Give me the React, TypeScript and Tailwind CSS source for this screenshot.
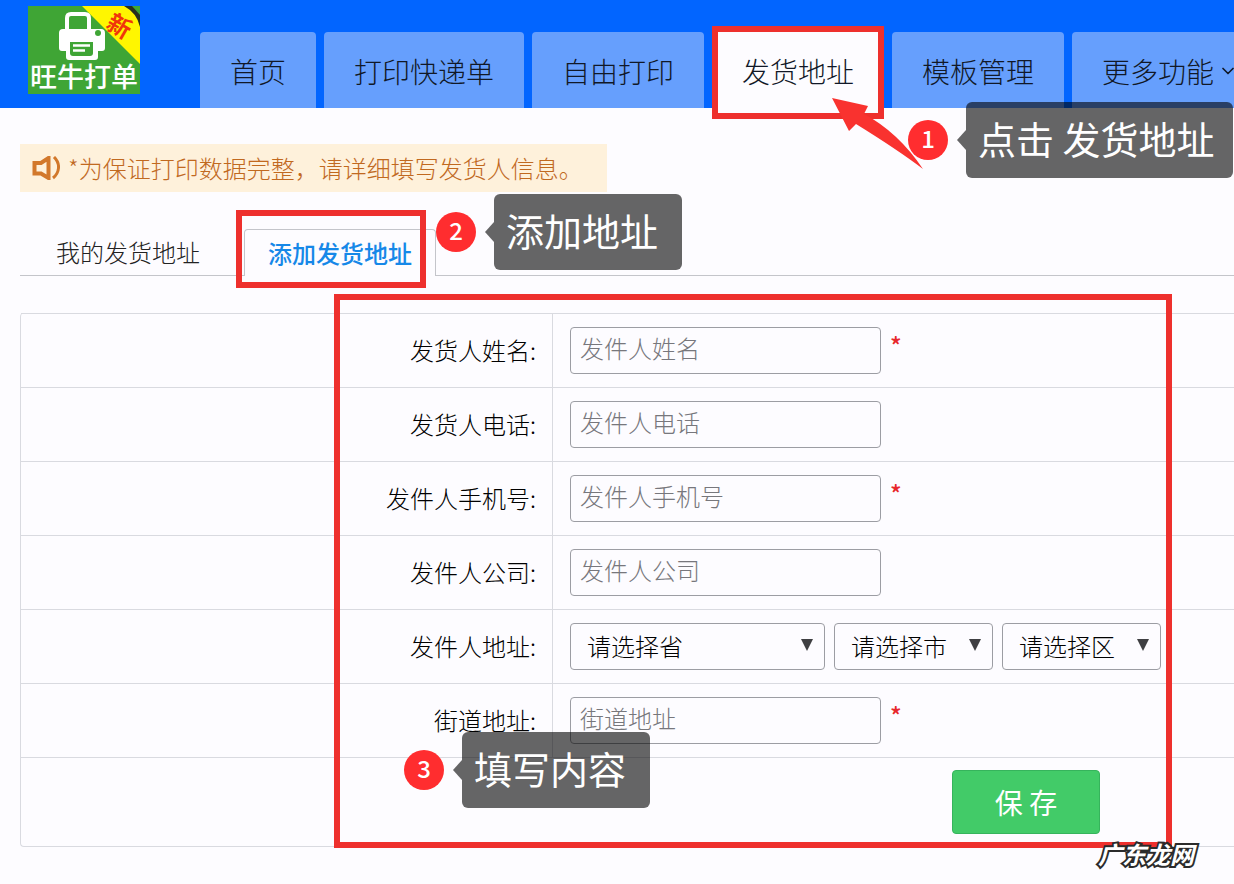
import React, { useState } from "react";
import { ChevronDown } from "lucide-react";

const navItems = ["首页", "打印快递单", "自由打印", "发货地址", "模板管理", "更多功能"];

const textFields = [
    { id: "name", label: "发货人姓名", placeholder: "发件人姓名", required: true },
    { id: "phone", label: "发货人电话", placeholder: "发件人电话", required: false },
    { id: "mobile", label: "发件人手机号", placeholder: "发件人手机号", required: true },
    { id: "company", label: "发件人公司", placeholder: "发件人公司", required: false },
];

const streetField = { id: "street", label: "街道地址", placeholder: "街道地址", required: true };

const regions = [
    { id: "province", text: "请选择省", width: "w-[255px]" },
    { id: "city", text: "请选择市", width: "w-[159px]" },
    { id: "district", text: "请选择区", width: "w-[159px]" },
];

// Numbered step with a dark tooltip on its right
function Callout({ step, text, className }: { step: number; text: string; className: string }) {
    return (
        <div className={`absolute z-20 flex items-center whitespace-nowrap ${className}`}>
            <span className="flex size-10 items-center justify-center rounded-full bg-[#ff2d2f] pb-1 text-2xl font-medium text-white">
                {step}
            </span>
            <svg className="ml-[9px] h-5 w-[9px]" viewBox="0 0 9 20" aria-hidden="true">
                <path d="M9 0v20L0 10z" fill="#000" fillOpacity="0.6" />
            </svg>
            <span className="h-[76px] min-w-[188px] rounded-md bg-black/60 pr-[18px] pl-3 text-[38px] leading-[72px] font-normal text-white">
                {text}
            </span>
        </div>
    );
}

function Logo() {
    return (
        <a href="#" className="relative mt-[6px] ml-7 block h-[88px] w-28 shrink-0 bg-[#3fa535]">
            <svg className="h-full w-full" viewBox="0 0 112 88" aria-hidden="true">
                <path d="M39 24V12q0-4 4-4h14q4 0 4 4v12" fill="none" stroke="#fff" strokeWidth="4" />
                <path d="M35 23h38q4 0 4 4v15q0 3-3 3h-4v6q0 3-3 3H41q-3 0-3-3v-6h-4q-3 0-3-3V27q0-4 4-4z" fill="#fff" />
                <path d="M42 36h23v11q0 3-3 3H45q-3 0-3-3z" fill="#3fa535" />
                <path d="M45 39.500h17M45 44.500h12" stroke="#fff" strokeWidth="2.5" />
                <circle cx="70" cy="27" r="3" fill="#3fa535" />
                <path d="M54 0h58v58z" fill="#fff600" />
                <path d="M96 0h16v21q-3-14-16-21z" fill="#26301f" />
                <path d="M104 0h8v9z" fill="#3fa535" />
            </svg>
            <span className="absolute top-[5px] left-20 rotate-30 text-2xl leading-7 font-bold text-[#f0350b]">新</span>
            <span className="absolute bottom-0 left-[2px] text-[27px] leading-9 font-medium whitespace-nowrap text-white">旺牛打单</span>
        </a>
    );
}

function Row({ id, label, children }: { id: string; label: string; children: React.ReactNode }) {
    return (
        <div className="flex border-t border-[#d9dae0]">
            <label
                htmlFor={id}
                className="w-[532px] shrink-0 border-r border-[#d9dae0] pr-4 text-right text-2xl leading-[72px] text-black"
            >
                {label}:
            </label>
            <div className="flex shrink-0 gap-[9px] py-[13px] pl-[17px]">{children}</div>
        </div>
    );
}

function TextRow({ id, label, placeholder, required }: (typeof textFields)[number]) {
    return (
        <Row id={id} label={label}>
            <input
                id={id}
                type="text"
                placeholder={placeholder}
                required={required}
                className="h-[47px] w-[311px] rounded-[4px] border border-[#9c9da3] px-[9px] pb-[6px] text-2xl text-black outline-none placeholder:text-[#77777c]"
            />
            {required && <span className="text-2xl leading-9 font-medium text-[#e8272c]">*</span>}
        </Row>
    );
}

export default function App() {
    const [activeNav, setActiveNav] = useState("发货地址");

    return (
        <div className="relative min-h-screen overflow-hidden bg-[#fdfcff] font-['Noto_Sans_CJK_SC',sans-serif] font-light text-[#222]">
            {/* Header */}
            <header className="flex h-[108px] bg-[#0265ff]">
                <Logo />
                <nav className="mt-8 ml-[60px] flex gap-2">
                    {navItems.map((item) => (
                        <div key={item} className="relative shrink-0">
                            <button
                                type="button"
                                onClick={() => setActiveNav(item)}
                                className={`flex h-[76px] items-center gap-1 rounded-t px-[30px] pt-[2px] text-[28px] whitespace-nowrap text-[#111827] ${
                                    item === activeNav ? "bg-[#fdfcff]" : "bg-[#669ffd]"
                                }`}
                            >
                                {item}
                                {item === "更多功能" && <ChevronDown className="size-5" />}
                            </button>
                            {item === "发货地址" && (
                                <>
                                    <div className="pointer-events-none absolute inset-x-0 -top-[6px] z-10 h-[93px] border-[6px] border-[#ee302d]" />
                                    <svg
                                        className="pointer-events-none absolute top-[66px] left-[120px] z-20 h-[72px] w-[92px]"
                                        viewBox="0 0 92 72"
                                        aria-hidden="true"
                                    >
                                        <path d="M0 0l36 8-4 8q34 18 59 55Q66 52 24 26l-7 7z" fill="#f9322f" />
                                    </svg>
                                    <Callout step={1} text="点击 发货地址" className="top-[70px] left-[196px]" />
                                </>
                            )}
                        </div>
                    ))}
                </nav>
            </header>

            <main className="pl-5">
                {/* Notice */}
                <div className="mt-9 flex h-12 w-fit items-center gap-2 bg-[#fef1db] pr-6 pl-3 text-[#c1691f]">
                    <svg className="h-6 w-7" viewBox="0 0 28 24" fill="none" stroke="#d2782b" aria-hidden="true">
                        <path d="M2.500 7h6.500L16.500 2v20L9 17.500H2.500z" strokeWidth="4" />
                        <path d="M22 1q5 5 4.500 11T21 22" strokeWidth="3" />
                    </svg>
                    <p className="text-2xl">*为保证打印数据完整，请详细填写发货人信息。</p>
                </div>

                {/* Tabs */}
                <div className="mt-[37px] flex text-2xl">
                    <button type="button" className="h-[47px] border-b border-[#c4c5ca] px-9">
                        我的发货地址
                    </button>
                    <div className="w-2 border-b border-[#c4c5ca]" />
                    <div className="relative">
                        <button
                            type="button"
                            className="h-[47px] rounded-t border border-b-0 border-[#c4c5ca] px-[23px] font-medium text-[#1688e8]"
                        >
                            添加发货地址
                        </button>
                        <div className="pointer-events-none absolute -top-[19px] -left-2 h-[78px] w-[190px] border-[6px] border-[#ee302d]" />
                        <Callout step={2} text="添加地址" className="-top-[35px] left-48" />
                    </div>
                    <div className="flex-1 border-b border-[#c4c5ca]" />
                </div>

                {/* Address form */}
                <form className="relative mt-[37px]" onSubmit={(e) => e.preventDefault()}>
                    <div className="rounded-l border-b border-l border-[#d9dae0]">
                        {textFields.map((field) => (
                            <TextRow key={field.id} {...field} />
                        ))}
                        <Row id="province" label="发件人地址">
                            {regions.map((region) => (
                                <div key={region.id} className="relative">
                                    <select
                                        id={region.id}
                                        aria-label={region.text}
                                        className={`h-[47px] appearance-none rounded-[4px] border border-[#9c9da3] pb-[2px] pl-4 text-2xl text-black outline-none ${region.width}`}
                                    >
                                        <option>{region.text}</option>
                                    </select>
                                    <svg
                                        className="pointer-events-none absolute top-4 right-3 size-3"
                                        viewBox="0 0 12 12"
                                        aria-hidden="true"
                                    >
                                        <path d="M0 0h12L6 12z" fill="#3f3f42" />
                                    </svg>
                                </div>
                            ))}
                        </Row>
                        <TextRow {...streetField} />
                        <div className="border-t border-[#d9dae0] py-3 pl-[931px]">
                            <button
                                type="submit"
                                className="h-16 w-[148px] rounded border border-[#36b45c] bg-[#42cb68] text-[28px] font-normal text-white"
                            >
                                保 存
                            </button>
                        </div>
                    </div>
                    <div className="pointer-events-none absolute -top-[19px] left-[314px] h-[554px] w-[838px] border-[6px] border-[#ee302d]" />
                    <Callout step={3} text="填写内容" className="top-[419px] left-96" />
                </form>
            </main>

            <div className="absolute right-10 bottom-[14px] z-20 text-2xl leading-8 font-bold text-white italic [-webkit-text-stroke:4px_#2b2b2b] [paint-order:stroke_fill]">
                广东龙网
            </div>
        </div>
    );
}
